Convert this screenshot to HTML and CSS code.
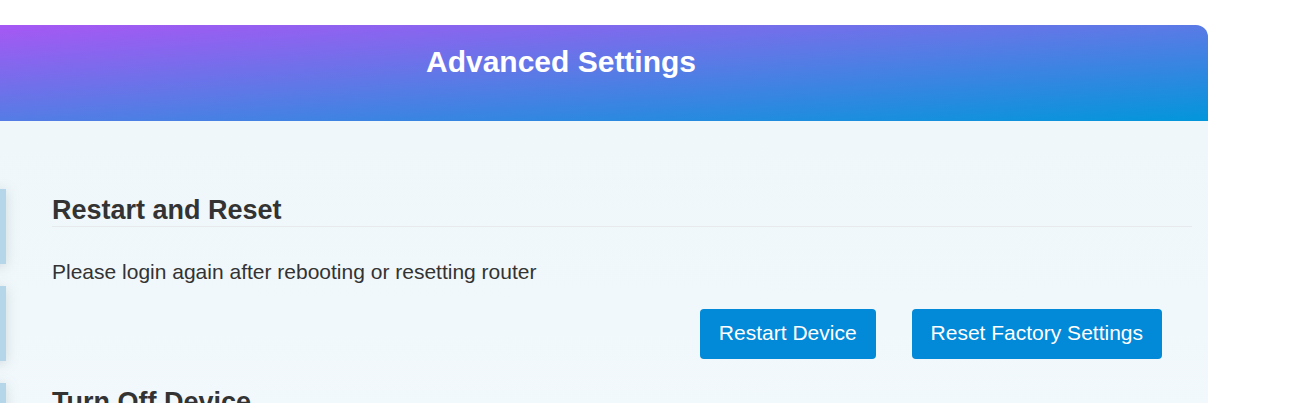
FILE: index.html
```html
<!DOCTYPE html>
<html lang="en">
<head>
<meta charset="utf-8">
<title>Advanced Settings</title>
<link rel="stylesheet" href="styles.css">
</head>
<body>
<div class="card">
  <header class="card-header">
    <h1 class="card-title">Advanced Settings</h1>
  </header>
  <div class="card-body">
    <nav class="side-nav">
      <div class="nav-item"></div>
      <div class="nav-item"></div>
      <div class="nav-item"></div>
    </nav>
    <main class="content">
      <section class="section">
        <h2 class="section-title">Restart and Reset</h2>
        <p class="section-text">Please login again after rebooting or resetting router</p>
        <div class="actions">
          <button class="btn" type="button">Restart Device</button>
          <button class="btn" type="button">Reset Factory Settings</button>
        </div>
      </section>
      <section class="section">
        <h2 class="section-title">Turn Off Device</h2>
      </section>
    </main>
  </div>
</div>
</body>
</html>
```

FILE: styles.css
```css
html, body {
  margin: 0;
  padding: 0;
  background: #ffffff;
  overflow: hidden;
}

body {
  font-family: "Liberation Sans", Arial, sans-serif;
  color: #333333;
  padding-top: 25px;
}

.card {
  width: 1294px;
  margin-left: -86px;
  border-top-right-radius: 12px;
  overflow: hidden;
  background: #f0f8fb;
}

.card-header {
  height: 96px;
  box-sizing: border-box;
  padding-top: 20px;
  background: linear-gradient(to bottom right, #ac55f5 0%, #5a7ae6 50%, #0296da 100%);
}

.card-title {
  margin: 0;
  font-size: 30px;
  line-height: 34px;
  font-weight: 700;
  color: #ffffff;
  text-align: center;
}

.card-body {
  display: flex;
  min-height: 400px;
  background: linear-gradient(to bottom, #eff7fa 0%, #f3f9fc 100%);
}

.side-nav {
  width: 92px;
  flex: none;
  display: flex;
  flex-direction: column;
  gap: 22px;
  padding-top: 68px;
}

.nav-item {
  height: 75px;
  background: #b5d6e8;
  box-shadow: 0 2px 12px rgba(120, 140, 150, 0.28);
}

.content {
  flex: 1;
  padding: 73px 16px 0 46px;
}

.section + .section {
  margin-top: 27px;
}

.section-title {
  margin: 0;
  font-size: 27px;
  line-height: 31px;
  font-weight: 700;
  color: #333333;
  padding-top: 1px;
  border-bottom: 1px solid #e6eaec;
}

.section-text {
  margin: 33px 0 0;
  font-size: 21px;
  line-height: 24px;
  color: #333333;
}

.actions {
  display: flex;
  justify-content: flex-end;
  gap: 36px;
  margin-top: 25px;
  padding-right: 30px;
}

.btn {
  font-family: "Liberation Sans", Arial, sans-serif;
  font-size: 21px;
  line-height: 24px;
  color: #ffffff;
  background: #0289d7;
  border: none;
  border-radius: 4px;
  padding: 12px 19px 14px;
  cursor: pointer;
}
```
